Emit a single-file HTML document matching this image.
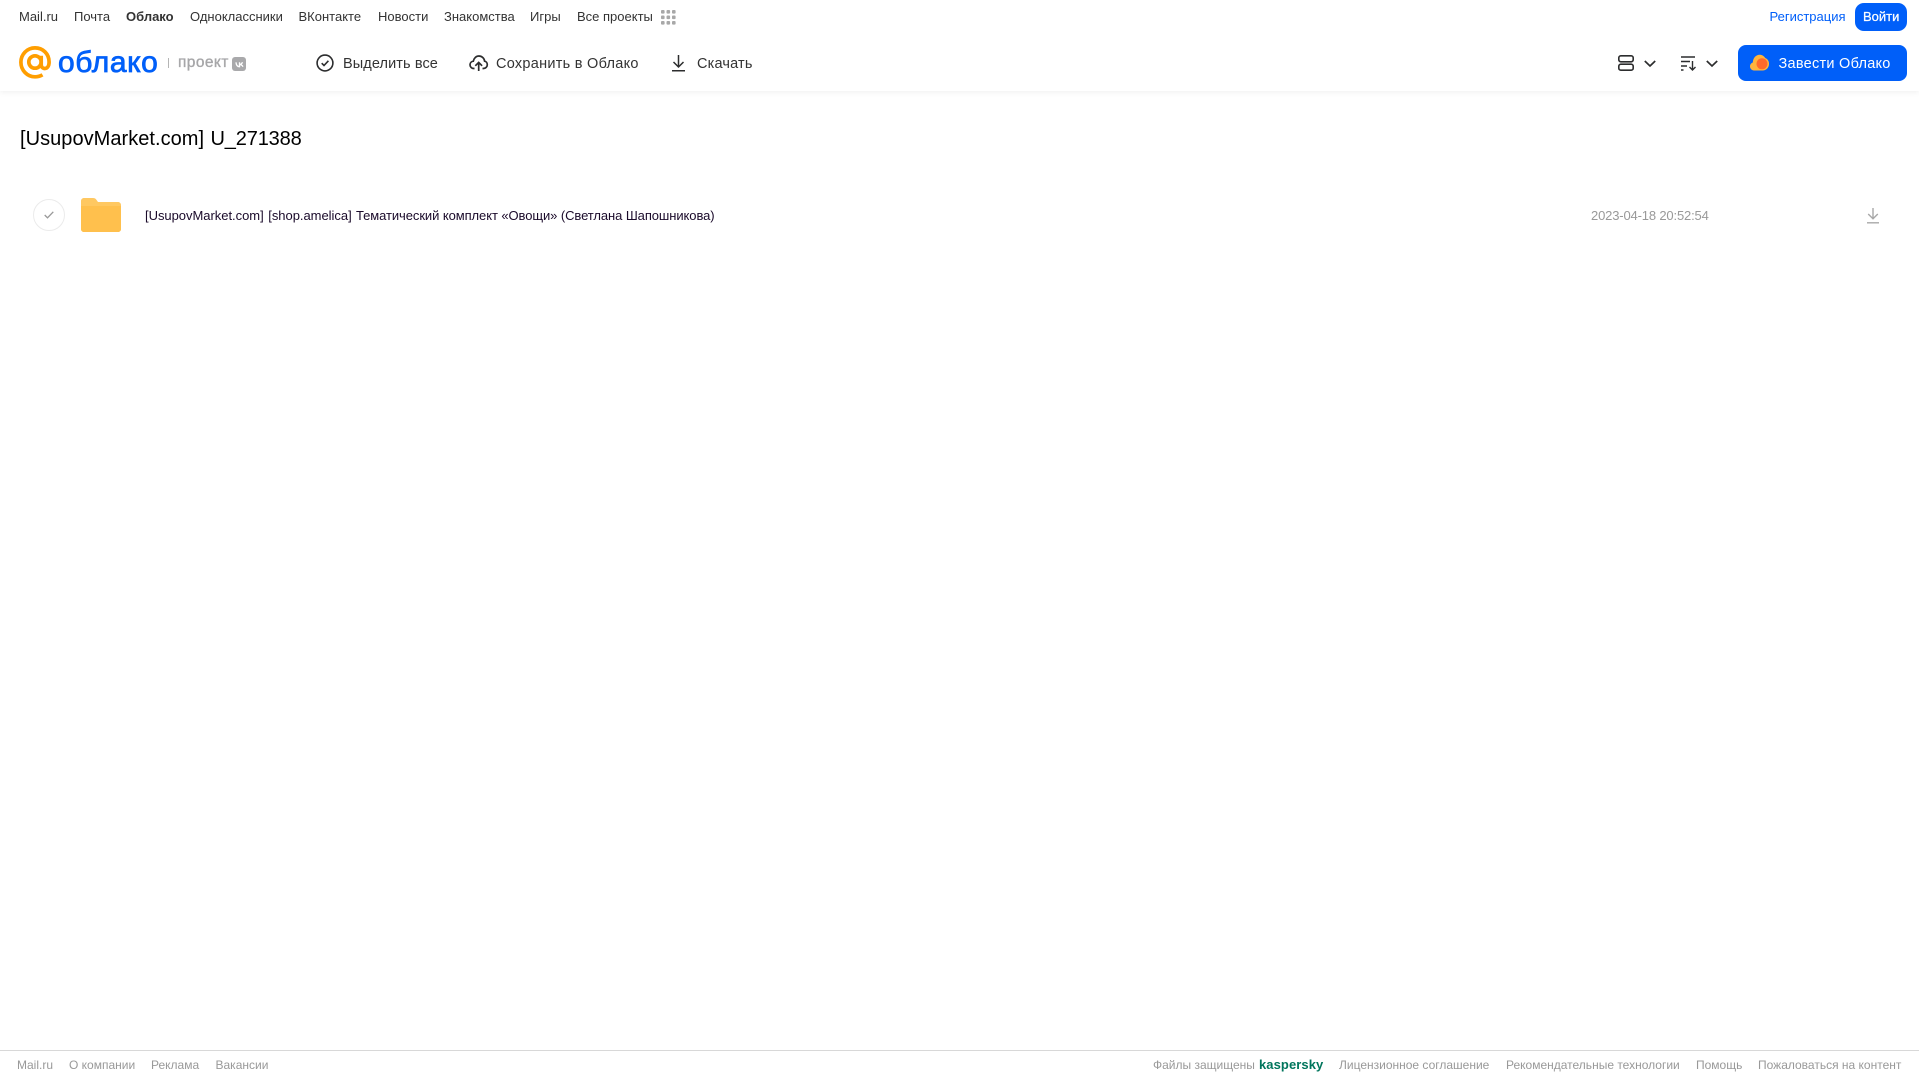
<!DOCTYPE html>
<html lang="ru"><head><meta charset="utf-8"><title>Облако</title>
<style>
html,body{margin:0;padding:0;background:#fff;width:1919px;height:1079px;overflow:hidden}
body{position:relative;font-family:"Liberation Sans",Arial,sans-serif}
.t{position:absolute;white-space:nowrap;line-height:20px}
svg{position:absolute;display:block;overflow:visible}
.n{top:7px;font-size:13px;color:#333}
.b{top:53.500px;font-size:14.5px;color:#333}
.f{top:1055px;font-size:12px;color:#999}
.hdr{position:absolute;left:0;top:0;width:1919px;height:91px;background:#fff;box-shadow:0 1px 6px rgba(0,0,0,.07)}
</style></head><body>
<div class="hdr"></div>

<span class="t n" style="left:19px">Mail.ru</span>
<span class="t n" style="left:74px">Почта</span>
<span class="t n" style="left:126px;font-weight:bold">Облако</span>
<span class="t n" style="left:190px">Одноклассники</span>
<span class="t n" style="left:298.500px">ВКонтакте</span>
<span class="t n" style="left:378px">Новости</span>
<span class="t n" style="left:444px">Знакомства</span>
<span class="t n" style="left:530px">Игры</span>
<span class="t n" style="left:577px">Все проекты</span>
<svg style="left:661px;top:10px" width="15" height="15" viewBox="0 0 15 15" fill="#a8a8a8"><rect x="0" y="0" width="3.6" height="3.6" rx="1"/><rect x="5.5" y="0" width="3.6" height="3.6" rx="1"/><rect x="11" y="0" width="3.6" height="3.6" rx="1"/><rect x="0" y="5.5" width="3.6" height="3.6" rx="1"/><rect x="5.5" y="5.5" width="3.6" height="3.6" rx="1"/><rect x="11" y="5.5" width="3.6" height="3.6" rx="1"/><rect x="0" y="11" width="3.6" height="3.6" rx="1"/><rect x="5.5" y="11" width="3.6" height="3.6" rx="1"/><rect x="11" y="11" width="3.6" height="3.6" rx="1"/></svg>

<span class="t" style="left:1769.500px;top:7px;font-size:13px;color:#005ff9">Регистрация</span>
<div style="position:absolute;left:1855px;top:3px;width:52px;height:28px;background:#005ff9;border-radius:9px"></div>
<span class="t" style="left:1863px;top:7px;font-size:13px;color:#fff;-webkit-text-stroke:.25px #fff">Войти</span>

<!-- logo -->
<svg style="left:19px;top:46px" width="33" height="33" viewBox="0 0 33 33" fill="none" stroke="#ff9e00" stroke-width="3.7"><circle cx="16" cy="16" r="6.2"/><path d="M22.200 9.800v8.600c0 2.800 1.700 4.100 3.500 4.100 2.500 0 4.400-2.300 4.400-6.500C30.100 7.800 23.900 1.900 16 1.900 8.200 1.900 1.900 8.300 1.900 16.300s6.300 14.500 14.100 14.500c2.900 0 5.300-.7 7.500-2"/></svg>
<span class="t" style="left:58px;top:46px;font-size:30px;line-height:34px;color:#005ff9;-webkit-text-stroke:.75px #005ff9;letter-spacing:.6px">облако</span>
<div style="position:absolute;left:168px;top:58px;width:1px;height:10px;background:#b5b5b5"></div>
<span class="t" style="left:178px;top:53px;font-size:15.500px;color:#a6a6a8;-webkit-text-stroke:.35px #a6a6a8;letter-spacing:.4px">проект</span>
<div style="position:absolute;left:232px;top:57px;width:14px;height:14px;background:#a9a9ab;border-radius:3px"></div>
<svg style="left:232.500px;top:57.500px" width="13" height="13" viewBox="0 0 13 13" fill="none" stroke="#fff" stroke-width="1.300"><path d="M3 4.300c.2 2.700 1.500 4.400 3.500 4.400V4.300M6.500 6.500C8 6.500 9 5.500 9.500 4.300M6.500 6.500C8 6.500 9.300 7.400 10 8.700"/></svg>

<!-- toolbar -->
<svg style="left:316px;top:54px" width="18" height="18" viewBox="0 0 18 18" fill="none" stroke="#2c2d2e" stroke-width="1.600"><circle cx="9" cy="9" r="7.900"/><path d="M5.700 9.200l2.300 2.300 4.400-4.700"/></svg>
<span class="t b" style="left:343px;letter-spacing:.1px">Выделить все</span>
<svg style="left:469px;top:54px" width="19" height="18" viewBox="0 0 19 18" fill="none" stroke="#2c2d2e" stroke-width="1.700"><path d="M5.500 14.500H4.800C2.800 14.500 1 13 1 10.800c0-2 1.500-3.400 3.300-3.600C5 4 7.300 2 9.900 2c3 0 5.400 2.200 5.700 5.200 1.600.3 2.700 1.700 2.700 3.400 0 2.200-1.700 3.900-3.900 3.900h-.9"/><path d="M9.700 17V9M6.300 11.800l3.400-3.400 3.400 3.400"/></svg>
<span class="t b" style="left:496px;letter-spacing:.27px">Сохранить в Облако</span>
<svg style="left:671px;top:54px" width="15" height="18" viewBox="0 0 15 18" fill="none" stroke="#2c2d2e" stroke-width="1.500"><path d="M7.500 1v11.500M2.500 8l5 5 5-5M1 16.800h13"/></svg>
<span class="t b" style="left:697px;letter-spacing:.17px">Скачать</span>

<!-- right tools -->
<svg style="left:1618px;top:55px" width="16" height="16" viewBox="0 0 16 16" fill="none" stroke="#2c2d2e" stroke-width="1.600"><rect x=".8" y=".8" width="14.400" height="6" rx="2"/><rect x=".8" y="9.200" width="14.400" height="6" rx="2"/></svg>
<svg style="left:1644px;top:60px" width="12" height="7" viewBox="0 0 12 7" fill="none" stroke="#2c2d2e" stroke-width="1.700"><path d="M.8 1l5.200 5 5.200-5"/></svg>
<svg style="left:1681px;top:56px" width="16" height="15" viewBox="0 0 16 15" fill="none" stroke="#2c2d2e" stroke-width="1.400"><path d="M0 1h14M0 5.500h9M0 10h6M0 14h2.500M11.500 5v9M8.500 11l3 3 3-3"/></svg>
<svg style="left:1706px;top:60px" width="12" height="7" viewBox="0 0 12 7" fill="none" stroke="#2c2d2e" stroke-width="1.700"><path d="M.8 1l5.200 5 5.200-5"/></svg>

<div style="position:absolute;left:1738px;top:45px;width:169px;height:36px;background:#005ff9;border-radius:8px"></div>
<svg style="left:1750px;top:54px" width="19" height="17" viewBox="0 0 19 17"><path fill="#ffb43c" d="M4 16.500C1.800 16.500 0 14.700 0 12.400c0-1.800 1.100-3.300 2.800-3.900C3 4 6 .8 9.600.8c2.400 0 4.400 1.300 5.600 3.200 2.200.8 3.800 2.900 3.800 5.500v.5c0 3.600-2.800 6.500-6.300 6.500z"/><circle cx="12" cy="9.800" r="5.500" fill="#ff6a2b"/></svg>
<span class="t" style="left:1778.500px;top:53.500px;font-size:14.5px;color:#fff;letter-spacing:.26px">Завести Облако</span>

<!-- title -->
<span class="t" style="left:20px;top:125.500px;font-size:20px;line-height:26px;color:#000;letter-spacing:.04px">[UsupovMarket.com]</span>
<span class="t" style="left:210.500px;top:125.500px;font-size:20px;line-height:26px;color:#000;letter-spacing:-.15px">U_271388</span>

<!-- row -->
<div style="position:absolute;left:33px;top:199px;width:30px;height:30px;border:1px solid #ebebeb;border-radius:50%"></div>
<svg style="left:44px;top:211px" width="10" height="8" viewBox="0 0 10 8" fill="none" stroke="#999" stroke-width="1.300"><path d="M.7 4l2.800 2.800L9.300 .8"/></svg>
<svg style="left:81px;top:198px" width="40" height="34" viewBox="0 0 40 34"><path fill="#ffc861" d="M3 0h9c1.500 0 2.500.6 3.300 1.600L17 4h20c1.700 0 3 1.300 3 3v24c0 1.700-1.300 3-3 3H3c-1.700 0-3-1.300-3-3V3C0 1.300 1.300 0 3 0z"/><path fill="#ffc04d" d="M0 8h40v23c0 1.700-1.300 3-3 3H3c-1.700 0-3-1.300-3-3z"/></svg>
<span class="t" style="left:145px;top:206px;font-size:13px;color:#1a0a2a;letter-spacing:-.03px;word-spacing:1px">[UsupovMarket.com] [shop.amelica]</span>
<span class="t" style="left:356px;top:206px;font-size:13px;color:#1a0a2a;letter-spacing:-.08px">Тематический комплект «Овощи» (Светлана Шапошникова)</span>
<span class="t" style="left:1591px;top:206px;font-size:13px;color:#999;letter-spacing:-.16px">2023-04-18 20:52:54</span>
<svg style="left:1866px;top:207px" width="14" height="17" viewBox="0 0 14 17" fill="none" stroke="#a8a8a8" stroke-width="1.400"><path d="M7 1v10.500M2.200 7l4.800 4.800L11.800 7M1 15.800h12"/></svg>

<!-- footer -->
<div style="position:absolute;left:0;top:1050px;width:1919px;height:1px;background:#d8d8d8"></div>
<span class="t f" style="left:17px">Mail.ru</span>
<span class="t f" style="left:69px">О компании</span>
<span class="t f" style="left:151px">Реклама</span>
<span class="t f" style="left:215.500px">Вакансии</span>
<span class="t f" style="left:1153px">Файлы защищены</span>
<span class="t f" style="left:1259px;font-size:13px;font-weight:bold;color:#00755c;letter-spacing:.08px">kaspersky</span>
<span class="t f" style="left:1339px">Лицензионное соглашение</span>
<span class="t f" style="left:1506px">Рекомендательные технологии</span>
<span class="t f" style="left:1696px">Помощь</span>
<span class="t f" style="left:1758px">Пожаловаться на контент</span>
</body></html>
